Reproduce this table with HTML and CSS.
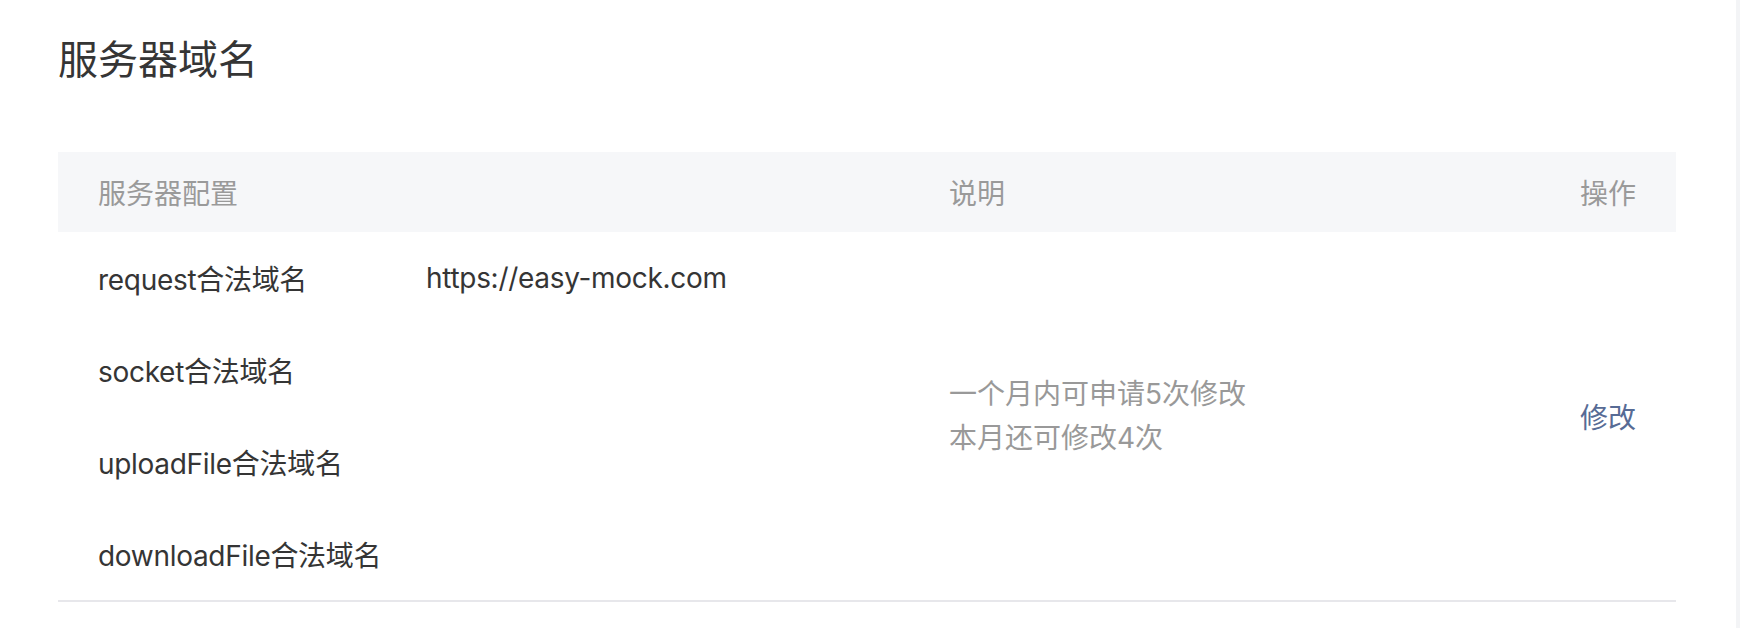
FILE: index.html
```html
<!DOCTYPE html>
<html lang="zh-CN">
<head>
<meta charset="utf-8">
<title>服务器域名</title>
<link rel="stylesheet" href="styles.css">
</head>
<body>
<div class="page">
  <h2 class="title">服务器域名</h2>
  <div class="table">
    <div class="thead">
      <div class="th">服务器配置</div>
      <div class="th">说明</div>
      <div class="th th-op">操作</div>
    </div>
    <div class="tbody">
      <div class="cell-config">
        <div class="cfg-row"><span class="cfg-label">request合法域名</span><span class="cfg-value">https://easy-mock.com</span></div>
        <div class="cfg-row"><span class="cfg-label">socket合法域名</span><span class="cfg-value"></span></div>
        <div class="cfg-row"><span class="cfg-label">uploadFile合法域名</span><span class="cfg-value"></span></div>
        <div class="cfg-row"><span class="cfg-label">downloadFile合法域名</span><span class="cfg-value"></span></div>
      </div>
      <div class="cell-desc">
        <p>一个月内可申请5次修改</p>
        <p>本月还可修改4次</p>
      </div>
      <div class="cell-op"><a class="link" href="#">修改</a></div>
    </div>
  </div>
</div>
</body>
</html>
```

FILE: styles.css
```css
html, body {
  margin: 0;
  padding: 0;
  background: #ffffff;
}

body {
  font-family: "Inter", "Noto Sans CJK SC", sans-serif;
  color: #353535;
}

.page {
  box-sizing: border-box;
  width: 1740px;
  height: 628px;
  padding: 0 60px 0 58px;
  border-right: 4px solid #f3f4f6;
}

.title {
  margin: 0;
  padding-top: 32px;
  font-size: 40px;
  line-height: 56px;
  font-weight: 400;
  color: #353535;
}

.table {
  margin-top: 64px;
}

.thead,
.tbody {
  display: grid;
  grid-template-columns: 851px 1fr auto;
}

.thead {
  height: 80px;
  align-items: center;
  background: #f6f7f9;
  font-size: 28px;
  color: #9a9a9a;
}

.th {
  padding-left: 40px;
}

.th-op {
  padding: 0 40px 0 0;
  text-align: right;
}

.tbody {
  border-bottom: 2px solid #e7e7eb;
  font-size: 28px;
}

.cfg-row {
  display: flex;
  align-items: center;
  height: 92px;
  padding-left: 40px;
  letter-spacing: -0.3px;
}

.cfg-label {
  width: 328px;
  flex: none;
}

.cell-desc {
  align-self: center;
  padding-left: 40px;
  color: #999999;
}

.cell-desc p {
  margin: 0;
  line-height: 44px;
}

.cell-op {
  align-self: center;
  padding-right: 40px;
  text-align: right;
}

.link {
  color: #576b95;
  text-decoration: none;
}
```
